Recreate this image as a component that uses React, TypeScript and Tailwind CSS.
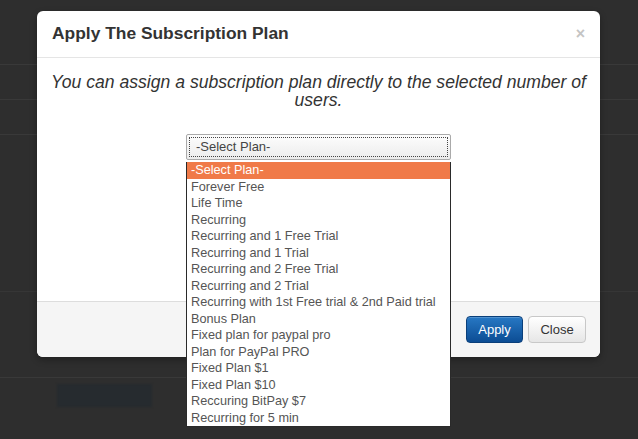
import { useState } from "react";

const plans = [
	"-Select Plan-",
	"Forever Free",
	"Life Time",
	"Recurring",
	"Recurring and 1 Free Trial",
	"Recurring and 1 Trial",
	"Recurring and 2 Free Trial",
	"Recurring and 2 Trial",
	"Recurring with 1st Free trial & 2nd Paid trial",
	"Bonus Plan",
	"Fixed plan for paypal pro",
	"Plan for PayPal PRO",
	"Fixed Plan $1",
	"Fixed Plan $10",
	"Reccuring BitPay $7",
	"Recurring for 5 min",
];

export default function App() {
	const [selected] = useState(0);

	return (
		<div className="relative w-[638px] h-[439px] overflow-hidden bg-[#2e2e2e] font-['Liberation_Sans',Arial,sans-serif]">
			{/* dimmed page behind the modal */}
			<div className="flex flex-col h-full">
				<div className="h-[65px] border-b border-[#393939]" />
				<div className="h-[35px] border-b border-[#393939]" />
				<div className="h-[35px] border-b border-[#393939]" />
				<div className="h-[157px] border-b border-[#363636]" />
				<div className="h-[86px] border-b border-[#393939]" />
				<div className="flex-1 pl-[57px] pt-[6px]">
					<div className="w-[95px] h-[23px] bg-[#262b2f] blur-[1px]" />
				</div>
			</div>

			{/* modal */}
			<div className="absolute left-[37px] top-[11px] w-[563px] h-[346px] bg-white rounded-[6px] flex flex-col overflow-hidden shadow-[0_3px_7px_rgba(0,0,0,0.3)]">
				<div className="h-[47px] border-b border-[#e5e5e5] flex items-center justify-between pl-[15px] pr-[15px]">
					<h3 className="text-[17.4px] font-bold text-[#333] leading-none">
						Apply The Subscription Plan
					</h3>
					<span className="text-[16px] font-bold text-[#c4c4c4] leading-none">
						×
					</span>
				</div>
				<div className="flex-1 flex flex-col items-center pt-[15px]">
					<p className="text-[17.6px] italic text-[#333] text-center leading-[18px] px-[8px]">
						You can assign a subscription plan directly to the selected number of
						users.
					</p>
					<div className="mt-[25px] w-[265px] h-[26px] border border-[#aaa] bg-gradient-to-b from-[#fdfdfd] to-[#ececec] p-[2px] rounded-[2px]">
						<div className="h-full border border-dotted border-[#444] flex items-center px-[6px] text-[13px] text-[#444]">
							-Select Plan-
						</div>
					</div>
				</div>
				<div className="h-[56px] bg-[#f5f5f5] border-t border-[#ddd] flex items-start justify-end gap-[5px] pt-[14px] pr-[14px]">
					<button
						type="button"
						className="w-[57px] h-[27px] rounded-[4px] border border-[#0a3f7a] bg-gradient-to-b from-[#2778c4] to-[#0c4d94] text-white text-[13px] shadow-[inset_0_1px_0_rgba(255,255,255,0.2)]"
					>
						Apply
					</button>
					<button
						type="button"
						className="w-[58px] h-[27px] rounded-[4px] border border-[#c8c8c8] bg-gradient-to-b from-white to-[#e6e6e6] text-[#333] text-[13px]"
					>
						Close
					</button>
				</div>
			</div>

			{/* open native dropdown list */}
			<ul className="absolute left-[186px] top-[162px] w-[265px] h-[265px] bg-white border border-[#2a2a2a] border-t-0 text-[12.7px] text-[#555]">
				{plans.map((p, i) => (
					<li
						key={p}
						className={`h-[16.5px] leading-[16.5px] px-[4px] whitespace-nowrap ${
							i === selected ? "bg-[#f07a48] text-white" : ""
						}`}
					>
						{p}
					</li>
				))}
			</ul>
		</div>
	);
}
